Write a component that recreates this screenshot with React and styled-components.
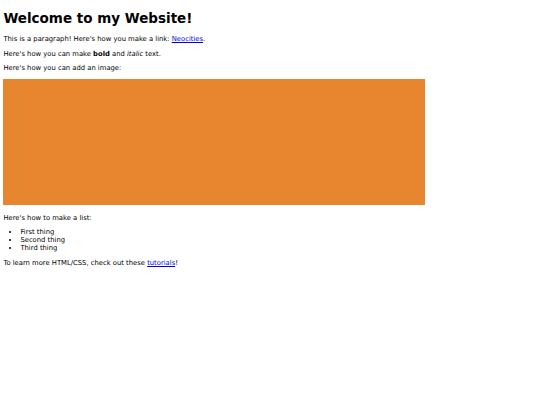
import React from 'react';
import styled, { createGlobalStyle } from 'styled-components';

const GlobalStyle = createGlobalStyle`
  body {
    margin: 3.4px;
    background: #ffffff;
    color: #000000;
    font-family: 'DejaVu Sans', Verdana, sans-serif;
    font-size: 6.8px;
  }
`

const Page = styled.main`
  display: block;
`

const Title = styled.h1`
  font-size: 13.5px;
  font-weight: bold;
  margin: 6.5px 0 9px;
`

const Paragraph = styled.p`
  margin: 1em 0;
`

const Link = styled.a`
  color: #0000ee;
  text-decoration: underline;
`

// the image sits inline, so it keeps the descender gap below it
const ImageLine = styled.div`
  display: block;
  margin: -0.5px 0 1px;
`

const Picture = styled.span`
  display: inline-block;
  vertical-align: baseline;
  width: 422px;
  height: 126px;
  background: #e8852f;
`

const List = styled.ul`
  margin: 1em 0;
  padding-left: 17px;
  list-style: disc;
`

function App() {
  return (
    <>
      <GlobalStyle />
      <Page>
        <Title>Welcome to my Website!</Title>
        <Paragraph>
          This is a paragraph! Here's how you make a link: <Link href="#">Neocities</Link>.
        </Paragraph>
        <Paragraph>
          Here's how you can make <strong>bold</strong> and <em>italic</em> text.
        </Paragraph>
        <Paragraph>Here's how you can add an image:</Paragraph>
        <ImageLine>
          <Picture role="img" aria-label="Site hosted by Neocities!" />
        </ImageLine>
        <Paragraph>Here's how to make a list:</Paragraph>
        <List>
          <li>First thing</li>
          <li>Second thing</li>
          <li>Third thing</li>
        </List>
        <Paragraph>
          To learn more HTML/CSS, check out these <Link href="#">tutorials</Link>!
        </Paragraph>
      </Page>
    </>
  );
}

export default App;
